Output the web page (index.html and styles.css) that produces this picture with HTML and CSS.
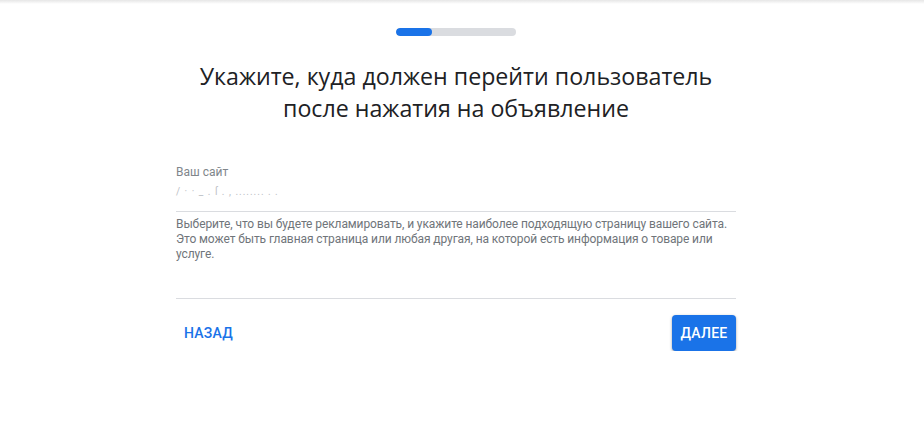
FILE: index.html
```html
<!DOCTYPE html>
<html lang="ru">
<head>
<meta charset="utf-8">
<link rel="stylesheet" href="styles.css">
</head>
<body>
<div class="topbar"></div>
<main class="page">
  <div class="content">
    <div class="progress"><div class="progress-fill"></div></div>
    <h1 class="title">Укажите, куда должен перейти пользователь<br>после нажатия на объявление</h1>
    <div class="field">
      <div class="field-label">Ваш сайт</div>
      <div class="field-value"><span class="blur">/ · · _ . ſ . , ........ . .</span></div>
    </div>
    <p class="hint">Выберите, что вы будете рекламировать, и укажите наиболее подходящую страницу вашего сайта. Это может быть главная страница или любая другая, на которой есть информация о товаре или услуге.</p>
    <div class="actions">
      <button class="btn-text">НАЗАД</button>
      <button class="btn-primary">ДАЛЕЕ</button>
    </div>
  </div>
</main>
</body>
</html>
```
FILE: styles.css
```css
html, body {
  margin: 0;
  padding: 0;
  background: #fff;
  font-family: Roboto, "Liberation Sans", Arial, sans-serif;
}
.topbar {
  height: 4px;
  background: linear-gradient(#e6e6e6, #fff);
}
.page {
  width: 912px;
}
.content {
  width: 560px;
  margin: 0 auto;
  display: flex;
  flex-direction: column;
}
.progress {
  align-self: center;
  width: 120px;
  height: 8px;
  border-radius: 4px;
  background: #dadce0;
  margin-top: 24px;
  overflow: hidden;
}
.progress-fill {
  width: 36px;
  height: 100%;
  background: #1a73e8;
  border-radius: 4px;
}
.title {
  margin: 24px 0 0;
  text-align: center;
  font-family: "Open Sans", Roboto, sans-serif;
  font-weight: 400;
  font-size: 23.2px;
  line-height: 32px;
  color: #202124;
}
.field {
  margin-top: 40px;
  border-bottom: 1px solid #dadce0;
  padding-bottom: 10px;
}
.field-label {
  font-size: 12px;
  line-height: 16px;
  color: #80868b;
}
.field-value {
  margin-top: 3px;
  height: 18px;
  font-size: 10px;
  line-height: 18px;
  color: #bdc1c6;
  letter-spacing: 1px;
}
.hint {
  margin: 5px 0 0;
  font-size: 12px;
  line-height: 15px;
  letter-spacing: -0.1px;
  color: #70757a;
  padding-bottom: 36px;
  border-bottom: 1px solid #dadce0;
}
.actions {
  display: flex;
  justify-content: space-between;
  align-items: center;
  margin-top: 16px;
}
button {
  font-family: Roboto, "Liberation Sans", Arial, sans-serif;
  font-size: 14px;
  font-weight: 500;
  letter-spacing: 0.25px;
  border: none;
  cursor: pointer;
}
.btn-text {
  background: transparent;
  color: #1a73e8;
  padding: 0 8px;
  height: 36px;
}
.btn-primary {
  background: #1a73e8;
  color: #fff;
  height: 36px;
  width: 64px;
  padding: 0;
  border-radius: 4px;
  box-shadow: 0 1px 3px rgba(60,64,67,0.35), 0 1px 2px rgba(60,64,67,0.2);
}
```
